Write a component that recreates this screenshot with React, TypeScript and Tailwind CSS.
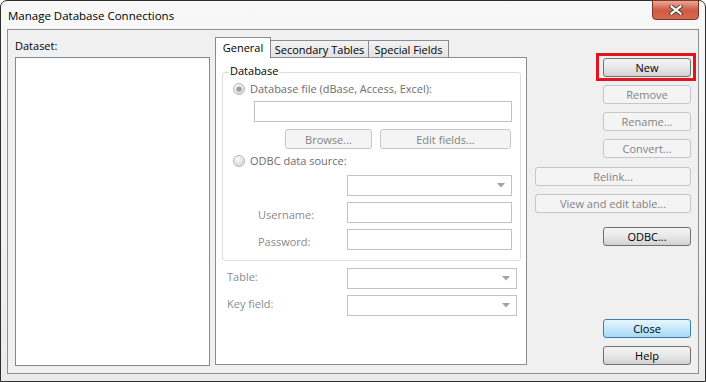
import React from 'react';

const disabledBtn = "flex items-center justify-center h-[19px] rounded-[3px] border border-[#c4c7ca] bg-[#f4f4f4] text-[#838383]";
const normalBtn = "flex items-center justify-center h-[19px] rounded-[3px] border border-[#707070] bg-linear-to-b from-[#f4f4f4] via-[#e8e8e8] to-[#d2d2d2] text-black";
const defaultBtn = "flex items-center justify-center h-[19px] rounded-[3px] border border-[#3c7fb1] bg-linear-to-b from-[#eaf6fd] via-[#c6e8fb] to-[#a7d9f5] text-black";

const Radio = ({ checked }: { checked?: boolean }) => (
    <svg width="12" height="12" viewBox="0 0 12 12">
        <defs>
            <radialGradient id={checked ? 'rg1' : 'rg2'} cx="40%" cy="35%" r="70%">
                <stop offset="0%" stopColor="#fbfbfb" />
                <stop offset="100%" stopColor="#d4d4d4" />
            </radialGradient>
        </defs>
        <circle cx="6" cy="6" r="5.5" fill={`url(#${checked ? 'rg1' : 'rg2'})`} stroke="#b9b9b9" />
        {checked && <circle cx="6" cy="6" r="2.6" fill="#9a9a9a" />}
    </svg>
);

const TextBox = ({ className }: { className: string }) => (
    <div className={`h-[21px] border border-[#c2c2c2] bg-white ${className}`} />
);

const Combo = ({ className }: { className: string }) => (
    <div className={`h-[21px] border border-[#c2c2c2] bg-white flex items-center justify-end pr-[6px] ${className}`}>
        <svg width="8" height="5" viewBox="0 0 8 5">
            <path d="M0 0 H8 L4 4.5 Z" fill="#a3a3a3" />
        </svg>
    </div>
);

const CloseX = () => (
    <div className="-mt-px mr-[6px] w-[47px] h-[20px] rounded-b-[4px] border border-[#7e3526] bg-linear-to-b from-[#e8a897] via-[#cf5a45] to-[#d4674f] flex items-center justify-center">
        <svg width="14" height="10" viewBox="0 0 14 10">
            <path d="M2.5 1.5 L11.5 8.5 M11.5 1.5 L2.5 8.5" stroke="#3b3b3b" strokeWidth="3.8" strokeLinecap="square" />
            <path d="M2.5 1.5 L11.5 8.5 M11.5 1.5 L2.5 8.5" stroke="#ffffff" strokeWidth="2.2" strokeLinecap="square" />
        </svg>
    </div>
);

const App = () => {
    return (
        <div className="w-[706px] h-[382px] bg-white font-['Open_Sans',sans-serif] text-[11px] leading-[15px] text-black">
            <div className="w-[706px] h-[382px] rounded-t-[7px] border border-[#2e2e2e] bg-linear-to-b from-[#f8f8f8] to-[#ebebeb] flex flex-col">
                {/* title bar */}
                <div className="h-[28px] flex items-start justify-between">
                    <span className="ml-[7px] mt-[7px] text-[11.5px]">Manage Database Connections</span>
                    <CloseX />
                </div>

                {/* client area */}
                <div className="mx-[6px] h-[345px] border border-[#8f8f8f] bg-[#f0f0f0] flex items-start pt-[7px] pl-[7px]">
                    {/* dataset list */}
                    <div className="w-[195px] flex flex-col">
                        <div className="h-[20px] pt-px">Dataset:</div>
                        <div className="h-[309px] border border-[#828790] bg-white" />
                    </div>

                    {/* tabs */}
                    <div className="ml-[5px] w-[312px] flex flex-col">
                        <div className="h-[20px] flex items-end">
                            <div className="relative z-10 -mb-px w-[56px] h-[21px] border-x border-t border-[#898c95] bg-white flex justify-center pt-[2px]">
                                General
                            </div>
                            <div className="w-[98px] h-[17px] border-t border-r border-[#898c95] bg-linear-to-b from-[#f3f3f3] to-[#e3e3e3] flex justify-center pt-px">
                                Secondary Tables
                            </div>
                            <div className="w-[80px] h-[17px] border-t border-r border-[#898c95] bg-linear-to-b from-[#f3f3f3] to-[#e3e3e3] flex justify-center pt-px">
                                Special Fields
                            </div>
                        </div>
                        <div className="h-[308px] border border-[#898c95] bg-white flex flex-col">
                            {/* Database group */}
                            <div className="relative mt-[14px] ml-[6px] w-[299px] h-[189px] border border-[#d5dfe5] rounded-[3px] flex flex-col">
                                <span className="absolute left-[6px] -top-[10px] px-[1px] bg-white">Database</span>
                                <div className="mt-[8px] pl-[10px] flex items-center gap-[5px] text-[#6d6d6d]">
                                    <Radio checked />
                                    <span>Database file (dBase, Access, Excel):</span>
                                </div>
                                <TextBox className="mt-[5px] ml-[31px] w-[258px]" />
                                <div className="mt-[7px] ml-[62px] flex gap-[8px]">
                                    <div className={`${disabledBtn} w-[87px] h-[20px]`}>Browse...</div>
                                    <div className={`${disabledBtn} w-[131px] h-[20px]`}>Edit fields...</div>
                                </div>
                                <div className="mt-[4px] pl-[10px] flex items-center gap-[5px] text-[#6d6d6d]">
                                    <Radio />
                                    <span>ODBC data source:</span>
                                </div>
                                <Combo className="mt-[7px] ml-[124px] w-[165px]" />
                                <div className="mt-[6px] ml-[35px] flex items-start">
                                    <span className="w-[89px] mt-[5px] text-[#8a8a8a]">Username:</span>
                                    <TextBox className="w-[165px]" />
                                </div>
                                <div className="mt-[6px] ml-[35px] flex items-start">
                                    <span className="w-[89px] mt-[5px] text-[#8a8a8a]">Password:</span>
                                    <TextBox className="w-[165px]" />
                                </div>
                            </div>

                            <div className="mt-[7px] ml-[11px] flex items-start">
                                <span className="w-[120px] mt-px text-[#8a8a8a]">Table:</span>
                                <Combo className="w-[170px]" />
                            </div>
                            <div className="mt-[6px] ml-[11px] flex items-start">
                                <span className="w-[120px] mt-px text-[#8a8a8a]">Key field:</span>
                                <Combo className="w-[170px]" />
                            </div>
                        </div>
                    </div>

                    {/* buttons */}
                    <div className="ml-[8px] w-[156px] mt-[21px] flex flex-col items-end">
                        <div className="relative">
                            <div className="absolute -left-[7px] -top-[5px] w-[100px] h-[28px] border-[3px] border-[#e3141b]" />
                            <div className={`${normalBtn} w-[88px]`}>New</div>
                        </div>
                        <div className={`${disabledBtn} w-[88px] mt-[8px]`}>Remove</div>
                        <div className={`${disabledBtn} w-[88px] mt-[8px]`}>Rename...</div>
                        <div className={`${disabledBtn} w-[88px] mt-[8px]`}>Convert...</div>
                        <div className={`${disabledBtn} w-[156px] mt-[9px]`}>Relink...</div>
                        <div className={`${disabledBtn} w-[156px] mt-[8px]`}>View and edit table...</div>
                        <div className={`${normalBtn} w-[88px] mt-[14px]`}>ODBC...</div>
                        <div className={`${defaultBtn} w-[88px] mt-[73px]`}>Close</div>
                        <div className={`${normalBtn} w-[88px] mt-[8px]`}>Help</div>
                    </div>
                </div>
            </div>
        </div>
    );
};

export default App;
